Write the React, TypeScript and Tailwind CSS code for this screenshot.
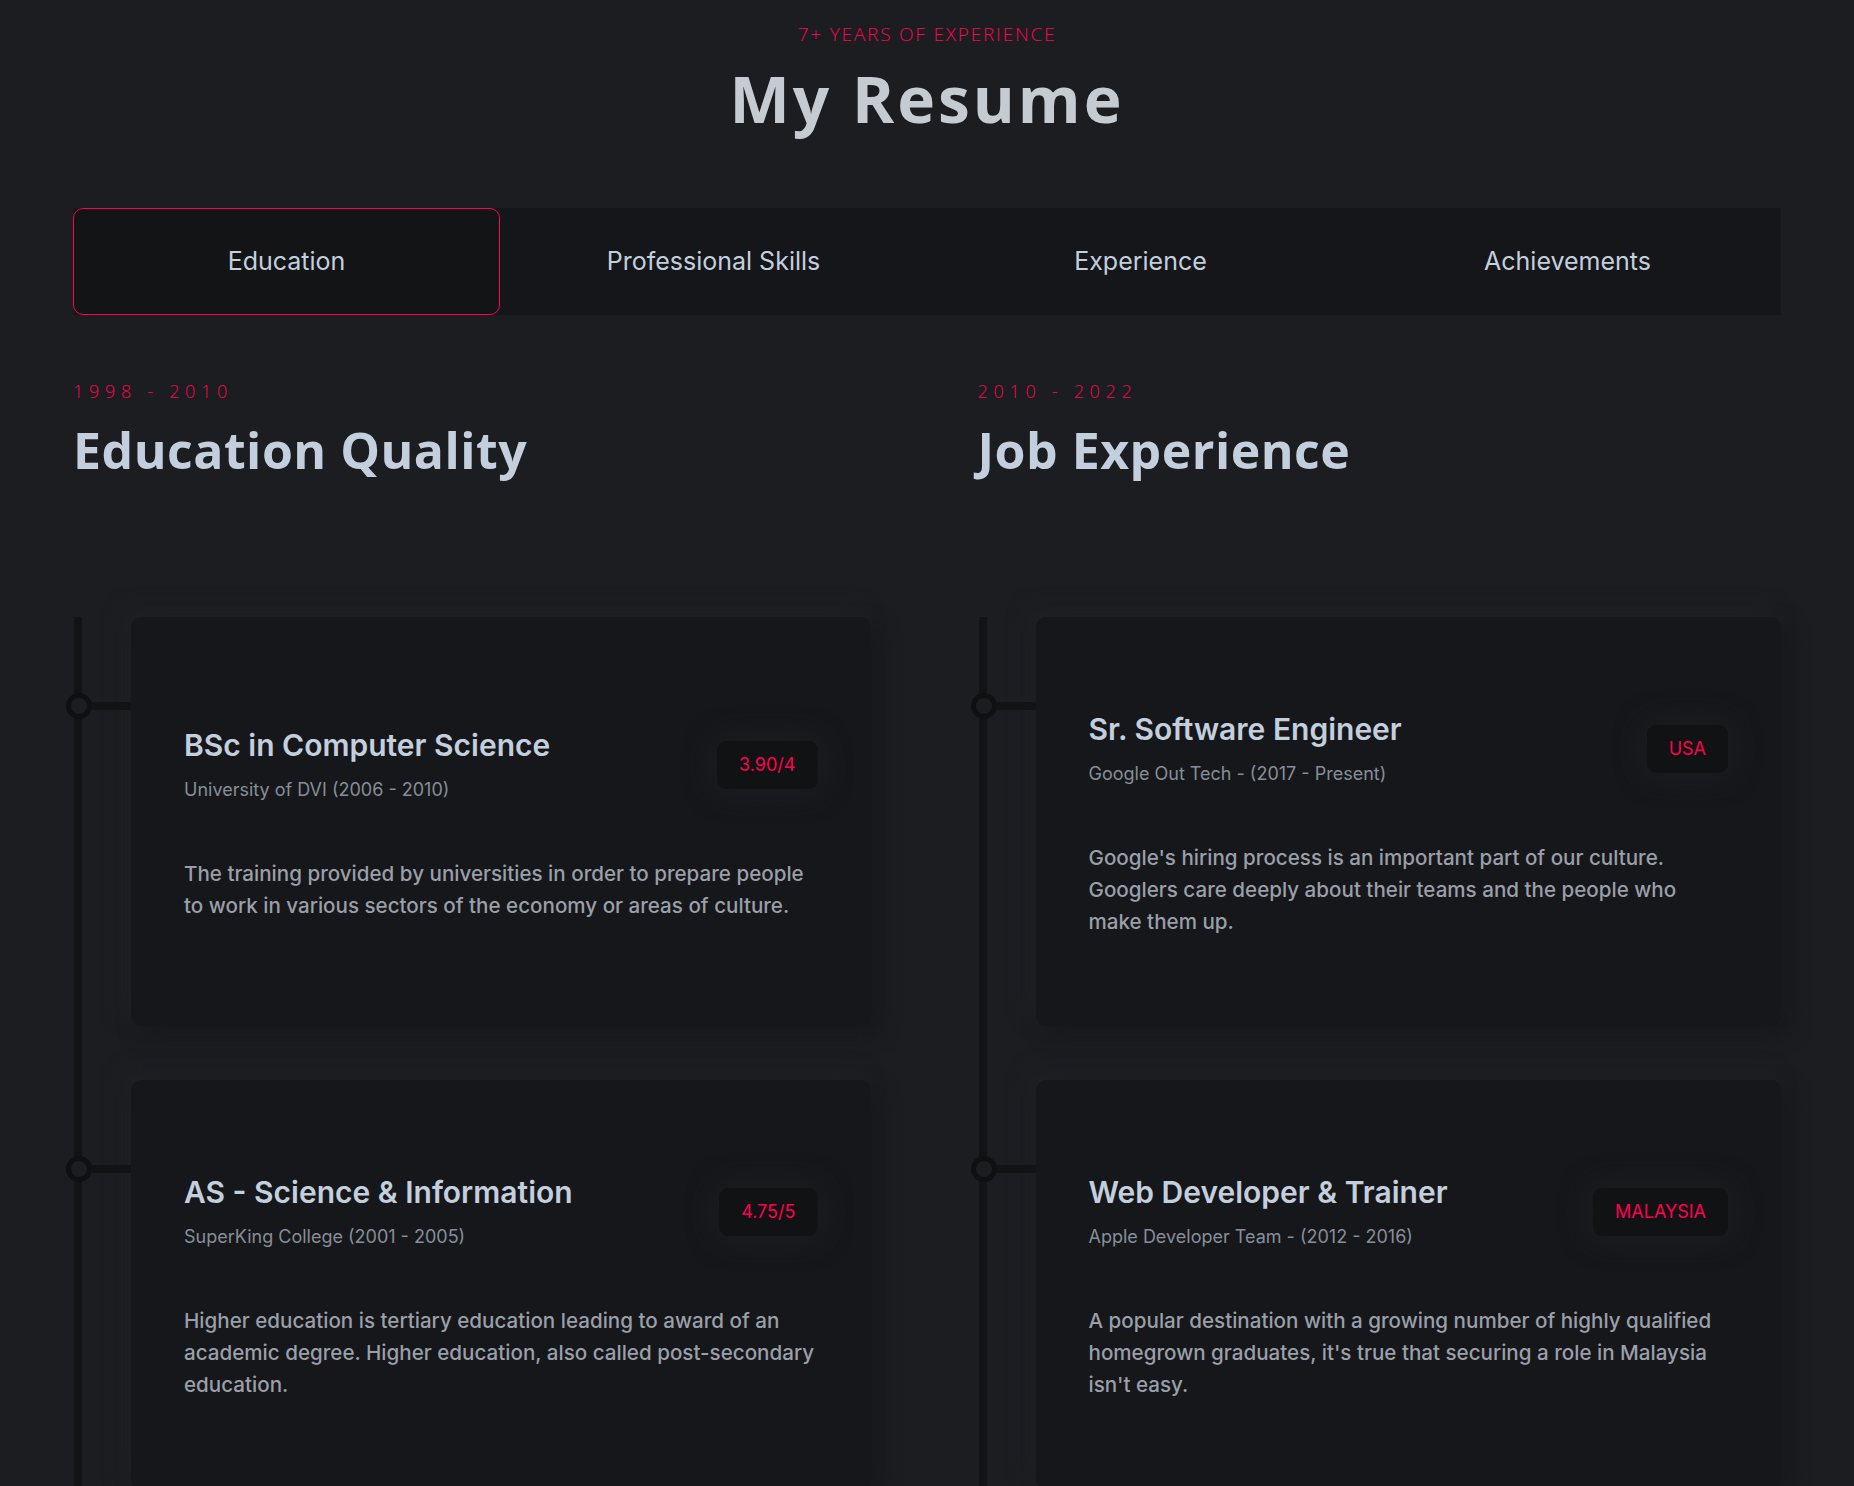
import React from "react";

type Entry = {
  title: string;
  subtitle: string;
  badge: string;
  text: string;
};

const education: Entry[] = [
  {
    title: "BSc in Computer Science",
    subtitle: "University of DVI (2006 - 2010)",
    badge: "3.90/4",
    text: "The training provided by universities in order to prepare people to work in various sectors of the economy or areas of culture.",
  },
  {
    title: "AS - Science & Information",
    subtitle: "SuperKing College (2001 - 2005)",
    badge: "4.75/5",
    text: "Higher education is tertiary education leading to award of an academic degree. Higher education, also called post-secondary education.",
  },
];

const jobs: Entry[] = [
  {
    title: "Sr. Software Engineer",
    subtitle: "Google Out Tech - (2017 - Present)",
    badge: "USA",
    text: "Google's hiring process is an important part of our culture. Googlers care deeply about their teams and the people who make them up.",
  },
  {
    title: "Web Developer & Trainer",
    subtitle: "Apple Developer Team - (2012 - 2016)",
    badge: "MALAYSIA",
    text: "A popular destination with a growing number of highly qualified homegrown graduates, it's true that securing a role in Malaysia isn't easy.",
  },
];

const tabs = ["Education", "Professional Skills", "Experience", "Achievements"];

const TimelineCard = ({ item }: { item: Entry }) => {
  return (
    <div className="relative flex h-[409px] flex-col justify-center rounded-[10px] bg-[#16171a] px-[53px] pt-[6px] shadow-[8px_8px_20px_#17181b,-8px_-8px_20px_#202226]">
      {/* timeline dot + connector */}
      <span className="absolute left-[-65px] top-[76px] h-[26px] w-[26px] rounded-full border-[5px] border-[#0f1012] bg-[#1c1d21]" />
      <span className="absolute left-[-39px] top-[85px] h-[8px] w-[39px] bg-[#121315]" />

      <div className="flex items-center justify-between">
        <div>
          <h4 className="text-[30px] font-semibold leading-[36px] text-[#c4cfde]">
            {item.title}
          </h4>
          <p className="mt-[14px] text-[18px] leading-[26px] text-[#878e99]">
            {item.subtitle}
          </p>
        </div>
        <span className="rounded-[9px] bg-[#111214] px-[22px] py-[12px] text-[18px] leading-[24px] text-[#ff014f] shadow-[0_0_30px_#1e2024]">
          {item.badge}
        </span>
      </div>
      <p className="-mr-[4px] mt-[55px] text-[20.6px] font-medium leading-[32px] text-[#9a9fa9]">
        {item.text}
      </p>
    </div>
  );
};

const Column = ({
  years,
  heading,
  items,
  extra,
}: {
  years: string;
  heading: string;
  items: Entry[];
  extra?: string;
}) => {
  return (
    <div className={extra}>
      <span className="block font-['Open_Sans',sans-serif] text-[18px] font-light leading-[24px] tracking-[5.7px] text-[#ff014f]">
        {years}
      </span>
      <h3 className="mt-[17px] font-['Open_Sans',sans-serif] text-[50px] font-bold leading-[60px] tracking-[0.5px] text-[#c4cfde]">
        {heading}
      </h3>
      <div className="ml-px mt-[137px] flex flex-col gap-[54px] border-l-[8px] border-[#121315] pl-[49px]">
        {items.map((item) => (
          <TimelineCard key={item.title} item={item} />
        ))}
      </div>
    </div>
  );
};

export default function App() {
  return (
    <div className="h-screen overflow-hidden bg-[#1c1d21] font-['Inter',sans-serif]">
      <div className="px-[73px] pt-[22px]">
        <div className="text-center font-['Open_Sans',sans-serif]">
          <span className="block text-[19px] font-light uppercase leading-[24px] tracking-[1.8px] text-[#ff014f]">
            7+ Years of Experience
          </span>
          <h2 className="mt-[21px] text-[64px] font-bold leading-[64px] tracking-[3px] text-[#c6cad1]">
            My Resume
          </h2>
        </div>

        <div className="mt-[77px] grid h-[107px] grid-cols-4 bg-[#151619]">
          {tabs.map((t, i) => (
            <button
              key={t}
              className={
                i === 0
                  ? "rounded-[10px] border-[1.5px] border-[#ff014f] bg-[#131416] text-[25px] text-[#c4cfde]"
                  : "text-[25px] text-[#c4cfde]"
              }
            >
              {t}
            </button>
          ))}
        </div>

        <div className="mt-[64px] grid grid-cols-2 gap-x-[101px]">
          <Column years="1998 - 2010" heading="Education Quality" items={education} extra="mr-[6px]" />
          <Column years="2010 - 2022" heading="Job Experience" items={jobs} />
        </div>
      </div>
    </div>
  );
}
